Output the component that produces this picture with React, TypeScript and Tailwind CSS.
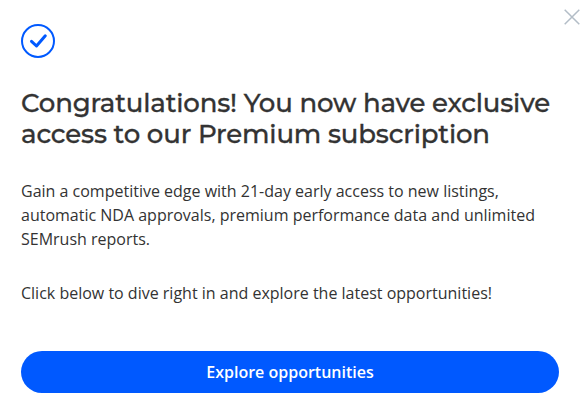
export default function App() {
  return (
    <div className="relative h-[413px] w-[586px] overflow-hidden bg-white pl-[21px] pr-[27px] pt-6 font-['Open_Sans','Noto_Sans',sans-serif] text-[#333333]">
      <button aria-label="Close" className="absolute top-[9px] right-[6px]">
        <svg width="16" height="16" viewBox="0 0 16 16" fill="none" stroke="#b3bdc7" strokeWidth="1.5">
          <path d="M.7 .7 15.3 15.3M15.3 .7 .7 15.3" />
        </svg>
      </button>
      <svg className="block" width="34" height="34" viewBox="0 0 34 34" fill="none" stroke="#0059ff">
        <circle cx="17" cy="17" r="16" strokeWidth="2" />
        <path d="M10.5 17.3 15.5 22 24.3 11.8" strokeWidth="3" strokeLinecap="round" strokeLinejoin="round" />
      </svg>
      <h1 className="mt-[30px] font-[Montserrat,'Open_Sans',sans-serif] text-[26px] leading-[31px] font-medium tracking-[-0.17px] whitespace-nowrap [-webkit-text-stroke:0.3px_#333333]">
        <span className="block">Congratulations! You now have exclusive</span>
        <span className="block">access to our Premium subscription</span>
      </h1>
      <p className="mt-[29px] text-base leading-6 whitespace-nowrap">
        Gain a competitive edge with 21-day early access to new listings,
        <br />
        automatic NDA approvals, premium performance data and unlimited
        <br />
        SEMrush reports.
      </p>
      <p className="mt-[30px] text-base leading-6 whitespace-nowrap">Click below to dive right in and explore the latest opportunities!</p>
      <button className="mt-[46px] flex h-[42px] w-full items-center justify-center rounded-full bg-[#0059ff] text-base font-semibold text-white">
        Explore opportunities
      </button>
    </div>
  );
}
